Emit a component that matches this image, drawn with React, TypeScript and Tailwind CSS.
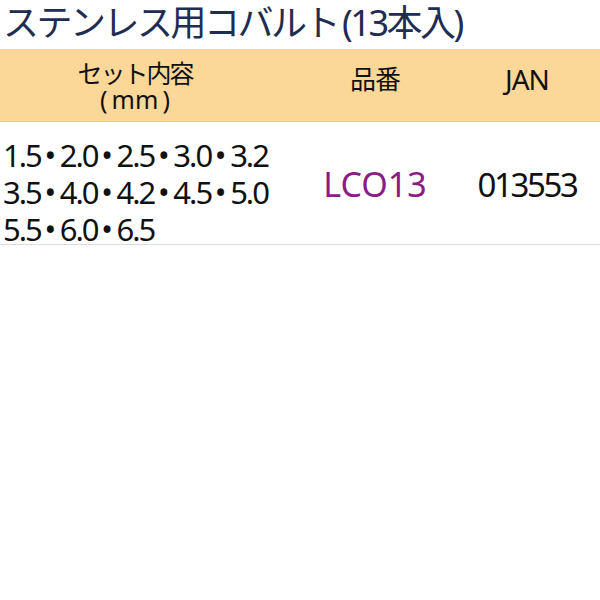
import React from 'react';

const sizes = ['1.5・2.0・2.5・3.0・3.2', '3.5・4.0・4.2・4.5・5.0', '5.5・6.0・6.5'];

const SizeLine: React.FC<{ line: string }> = ({ line }) => {
    const parts = line.split('・');
    return (
        <div className="whitespace-nowrap">
            {parts.map((p, i) => (
                <React.Fragment key={i}>
                    {i > 0 && <span className="inline-block w-[19px] text-center tracking-normal">•</span>}
                    {p}
                </React.Fragment>
            ))}
        </div>
    );
};

export default function App() {
    return (
        <div className="w-[600px] h-[600px] bg-white text-[#111] font-['Noto_Sans','Noto_Sans_CJK_JP',sans-serif]">
            <h1 className="pl-[3px] h-[49px] text-[36px] leading-[46px] text-[#1f2c54] tracking-[-2.5px] whitespace-nowrap">
                ステンレス用コバルト<span className="ml-[4px]">(13本入)</span>
            </h1>
            <div className="flex h-[73px] bg-[#fcd898] border-b border-[#e9cb93]">
                <div className="w-[270px] flex flex-col items-center justify-center leading-[26px] pt-[2px] text-[25px]">
                    <span className="tracking-[-2px]">セット内容</span>
                    <span>{'(\u2009mm\u2009)'}</span>
                </div>
                <div className="w-[210px] flex items-center justify-center pb-[12px] text-[26px] tracking-[-1px]">品番</div>
                <div className="w-[94px] flex items-center justify-center pb-[12px] text-[28px] tracking-[-1px]">JAN</div>
            </div>
            <div className="flex h-[123px] border-b border-[#dcdcdc] items-center">
                <div className="w-[270px] pl-[3px] pt-[18px] text-[31px] leading-[37px] tracking-[-2px]">
                    {sizes.map((s) => (
                        <SizeLine key={s} line={s} />
                    ))}
                </div>
                <div className="w-[210px] text-center text-[34px] text-[#8b1c87] pt-[3px]">LCO13</div>
                <div className="w-[94px] flex justify-center text-[33px] tracking-[-2.4px] pt-[3px]">013553</div>
            </div>
        </div>
    );
}
